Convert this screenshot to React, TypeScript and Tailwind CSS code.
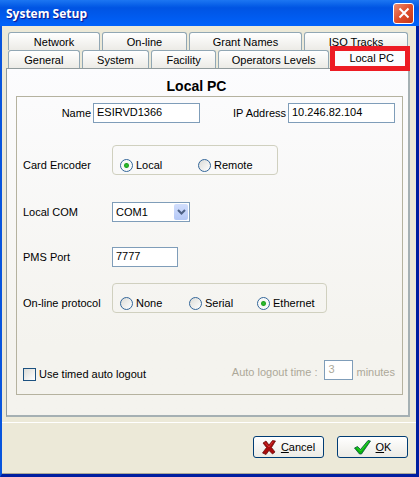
import { useState } from "react";
import type { ReactNode } from "react";

type RadioProps = {
  name: string;
  value: string;
  selected: string;
  onSelect: (value: string) => void;
  className?: string;
};

const Radio = ({ name, value, selected, onSelect, className }: RadioProps) => (
  <label className={`flex h-[18px] items-center gap-[3px] ${className || ""}`}>
    <input
      type="radio"
      name={name}
      value={value}
      checked={selected === value}
      onChange={() => onSelect(value)}
      className="size-[13px] shrink-0 appearance-none rounded-full border border-[#336699] bg-linear-to-br from-[#dcdcd7] to-white checked:bg-[radial-gradient(circle,#2fc52f_0,#22a322_2px,#f4f5f2_3px,#ffffff_6px)]"
    />
    {value}
  </label>
);

const Tab = ({ children }: { children: ReactNode }) => (
  <button
    type="button"
    role="tab"
    aria-selected={false}
    className="h-[18px] rounded-t-[3px] border border-b-0 border-[#91a7b4] bg-linear-to-b from-white to-[#ecebe6] whitespace-nowrap"
  >
    {children}
  </button>
);

const field =
  "h-5 min-w-0 rounded-none border border-[#7f9db9] bg-white px-[3px] pb-[2px] text-[11px] outline-none";

const group = "flex h-[30px] items-end rounded-[4px] border border-[#d0d0bf] pl-[7px]";

const actionButton =
  "flex h-[22px] w-[71px] items-center justify-center rounded-[3px] border border-[#003c74] bg-linear-to-b from-white to-[#ecebe5]";

const App = () => {
  const [name, setName] = useState("ESIRVD1366");
  const [address, setAddress] = useState("10.246.82.104");
  const [encoder, setEncoder] = useState("Local");
  const [com, setCom] = useState("COM1");
  const [port, setPort] = useState("7777");
  const [protocol, setProtocol] = useState("Ethernet");
  const [timed, setTimed] = useState(false);
  const [minutes, setMinutes] = useState("3");

  return (
    <div className="w-full border-r-3 border-b-3 border-l-2 border-[#0831d9] border-r-[#001ea0] border-b-[#001ea0] border-l-[#0855dd] bg-[#ece9d8] font-['Liberation_Sans',Arial,sans-serif] text-[11px] leading-[14px] text-black">
      <header className="-mr-[3px] -ml-[2px] flex h-[26px] items-center justify-between bg-linear-to-b from-[#1c76f2] via-[#0054e3] via-30% to-[#0062fb] pr-[5px] pl-[6px]">
        <h1 className="pt-[2px] font-['Open_Sans','Noto_Sans',sans-serif] text-[12px] font-bold text-white [text-shadow:1px_1px_1px_#0f1089]">
          System Setup
        </h1>
        <button
          type="button"
          aria-label="Close"
          className="flex size-[21px] items-center justify-center rounded-[3px] border border-white bg-linear-to-br from-[#ec8b6d] via-[#df4e2b] to-[#c53716]"
        >
          <svg viewBox="0 0 12 12" className="size-3">
            <path d="M1.5 1.5 10.5 10.5M10.5 1.5 1.5 10.5" stroke="#fff" strokeWidth="2" />
          </svg>
        </button>
      </header>

      <main className="pt-[6px] pr-[6px] pl-1">
        <div role="tablist" aria-label="Setup pages" className="px-[2px]">
          <div className="grid grid-cols-[92fr_85fr_113fr_104fr] gap-[2px]">
            <Tab>Network</Tab>
            <Tab>On-line</Tab>
            <Tab>Grant Names</Tab>
            <Tab>ISO Tracks</Tab>
          </div>
          <div className="grid grid-cols-[72fr_68fr_65fr_112fr_77fr] gap-x-[2px]">
            <Tab>General</Tab>
            <Tab>System</Tab>
            <Tab>Facility</Tab>
            <Tab>Operators Levels</Tab>
            <button
              type="button"
              role="tab"
              aria-selected={true}
              className="relative h-[18px] bg-[#fcfcfe] pb-[2px] pl-1"
            >
              Local PC
              <span className="absolute -top-1 -right-[2px] -bottom-[3px] -left-px border-5 border-[#ed1c24]" />
            </button>
          </div>
        </div>

        <section className="border border-r-2 border-b-2 border-[#919b9c] border-r-[#a5b0b3] border-b-[#a5b0b3] bg-linear-to-b from-[#fcfcfe] to-[#f4f3ee] to-80% pr-[5px] pb-5 pl-[9px]">
          <h2 className="flex h-[27px] items-center justify-center pt-[7px] pr-[26px] text-[14px] font-bold">
            Local PC
          </h2>

          <form
            onSubmit={(e) => e.preventDefault()}
            className="border border-[#b5b29f] pt-[6px] pr-[7px] pb-[13px] pl-[6px]"
          >
            <div className="flex items-center justify-between">
              <div className="flex items-center gap-[2px]">
                <label htmlFor="pcName" className="w-[68px] text-right">
                  Name
                </label>
                <input
                  id="pcName"
                  type="text"
                  value={name}
                  onChange={(e) => setName(e.target.value)}
                  className={`${field} w-[107px]`}
                />
              </div>
              <div className="flex items-center gap-[2px]">
                <label htmlFor="ipAddress">IP Address</label>
                <input
                  id="ipAddress"
                  type="text"
                  value={address}
                  onChange={(e) => setAddress(e.target.value)}
                  className={`${field} w-[107px]`}
                />
              </div>
            </div>

            <div className="mt-[22px] flex items-end">
              <span id="encoderLabel" className="flex h-5 w-[89px] items-center">
                Card Encoder
              </span>
              <div role="radiogroup" aria-labelledby="encoderLabel" className={`${group} w-[166px]`}>
                <Radio name="encoder" value="Local" selected={encoder} onSelect={setEncoder} className="w-[78px]" />
                <Radio name="encoder" value="Remote" selected={encoder} onSelect={setEncoder} />
              </div>
            </div>

            <div className="mt-[27px] flex items-center">
              <label htmlFor="localCom" className="w-[89px]">
                Local COM
              </label>
              <div className="relative flex">
                <select
                  id="localCom"
                  value={com}
                  onChange={(e) => setCom(e.target.value)}
                  className="h-5 w-[78px] appearance-none border border-[#7f9db9] bg-white pl-[3px] text-[11px] outline-none"
                >
                  <option>COM1</option>
                  <option>COM2</option>
                </select>
                <span className="pointer-events-none absolute inset-y-[2px] right-[2px] flex w-[14px] items-center justify-center rounded-[2px] bg-linear-to-b from-[#d2defc] to-[#b4c8f6]">
                  <svg viewBox="0 0 9 6" className="h-[6px] w-[9px]">
                    <path d="M1 1 4.500 4.500 8 1" fill="none" stroke="#4d6185" strokeWidth="2" />
                  </svg>
                </span>
              </div>
            </div>

            <div className="mt-[25px] flex items-center">
              <label htmlFor="pmsPort" className="w-[89px]">
                PMS Port
              </label>
              <input
                id="pmsPort"
                type="text"
                value={port}
                onChange={(e) => setPort(e.target.value)}
                className={`${field} w-[66px]`}
              />
            </div>

            <div className="mt-4 flex items-end">
              <span id="protocolLabel" className="flex h-5 w-[89px] items-center">
                On-line protocol
              </span>
              <div role="radiogroup" aria-labelledby="protocolLabel" className={`${group} w-[215px]`}>
                <Radio name="protocol" value="None" selected={protocol} onSelect={setProtocol} className="w-[69px]" />
                <Radio name="protocol" value="Serial" selected={protocol} onSelect={setProtocol} className="w-[68px]" />
                <Radio name="protocol" value="Ethernet" selected={protocol} onSelect={setProtocol} />
              </div>
            </div>

            <div className="mt-[47px] flex items-start justify-between">
              <label className="flex items-center gap-[3px] pt-[7px]">
                <input
                  type="checkbox"
                  checked={timed}
                  onChange={(e) => setTimed(e.target.checked)}
                  className="size-[13px] appearance-none border border-[#1c5180] bg-linear-to-br from-[#dcdcd7] to-white checked:bg-[#21a121]"
                />
                Use timed auto logout
              </label>
              <div className="flex items-center text-[#aca899]">
                <label htmlFor="logoutTime" className="pt-1 pr-[7px]">
                  Auto logout time :
                </label>
                <input
                  id="logoutTime"
                  type="text"
                  disabled={!timed}
                  value={minutes}
                  onChange={(e) => setMinutes(e.target.value)}
                  className={`${field} w-[29px]`}
                />
                <span className="pt-1 pl-[3px]">minutes</span>
              </div>
            </div>
          </form>
        </section>
      </main>

      <footer className="mt-[5px] flex justify-end gap-[13px] border-t border-b border-t-white border-b-[#aca899] pt-[13px] pr-2 pb-[15px]">
        <button type="button" className={`${actionButton} gap-[5px]`}>
          <svg viewBox="0 0 14 15" className="h-[15px] w-[14px]">
            <path
              d="M1 3 4 1 7 5 10.500 .500 13.500 1 9.500 7.500 13 12 10.500 14 7 10.500 4 14.500 .500 13 4.500 7.500Z"
              fill="#a80c0c"
              stroke="#5e0505"
              strokeWidth=".7"
            />
            <path d="M3 2.500 7 7 11 1.500" fill="none" stroke="#e23a3a" strokeWidth=".8" />
          </svg>
          <span>
            <u>C</u>ancel
          </span>
        </button>
        <button type="button" className={`${actionButton} gap-[5px]`}>
          <svg viewBox="0 0 17 15" className="h-[15px] w-[17px]">
            <path
              d="M.500 8 3.500 6.500 6.500 9.500 14 .500 16.500 1 7.500 14 5.500 14Z"
              fill="#0bb50b"
              stroke="#064f40"
              strokeWidth=".8"
            />
            <path d="M3 7.500 6.500 11 14.500 1.500" fill="none" stroke="#35e035" strokeWidth=".8" />
          </svg>
          <span>
            <u>O</u>K
          </span>
        </button>
      </footer>
    </div>
  );
};

export default App;
